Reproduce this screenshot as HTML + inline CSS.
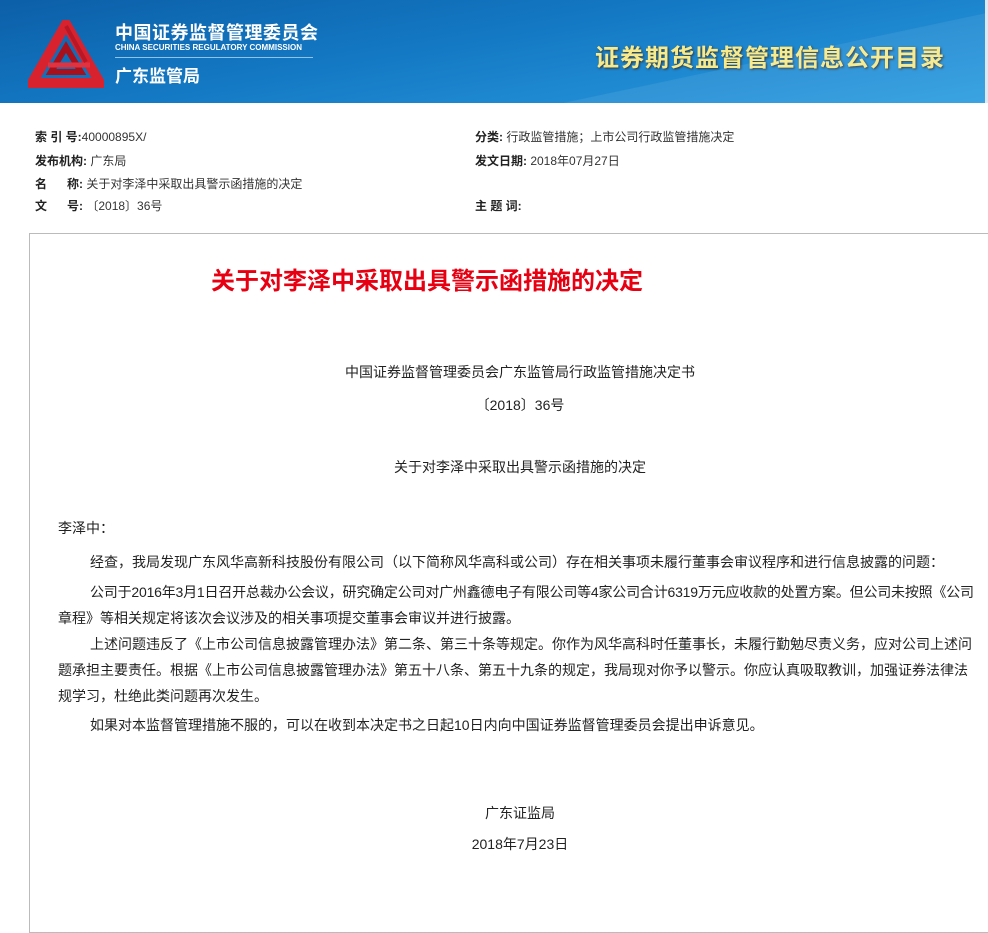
<!DOCTYPE html>
<html><head><meta charset="utf-8">
<style>
*{margin:0;padding:0;box-sizing:border-box}
body{width:988px;height:866px;overflow:hidden;background:#fff;font-family:"Liberation Sans","Noto Sans CJK SC",sans-serif;color:#222;position:relative}
.hdr{position:absolute;left:0;top:0;width:985px;height:103px;background:linear-gradient(170deg,#0c5fa8 0%,#1479c4 45%,#2a9ce0 100%);overflow:hidden}
.hdr:after{content:"";position:absolute;left:520px;top:40px;width:700px;height:200px;background:rgba(255,255,255,0.08);transform:rotate(-12deg)}
.strip{position:absolute;left:985px;top:0;width:3px;height:103px;background:#dfe9f3}
.ab{position:absolute;white-space:nowrap}
.meta{font-size:12px;color:#333}
.meta b{font-weight:bold;color:#222}
.box{position:absolute;left:29px;top:233px;width:970px;height:700px;border:1px solid #bbb}
.c{font-size:14px;color:#222;position:absolute;left:0;width:1040px;text-align:center}
.p{position:absolute;left:58px;font-size:14px;color:#222;white-space:nowrap}
</style></head><body>
<div class="hdr">
<svg class="ab" style="left:28px;top:20px" width="76" height="68" viewBox="0 0 76 68">
<polygon points="38,4 72,63 4,63" fill="none" stroke="#d8232f" stroke-width="10" stroke-linejoin="miter"/>
<polygon points="38,27 53,52 23,52" fill="none" stroke="#a8101c" stroke-width="6"/>
<line x1="20" y1="45" x2="62" y2="45" stroke="#e23240" stroke-width="5"/>
<line x1="38" y1="6" x2="58" y2="42" stroke="#b81826" stroke-width="4"/>
</svg>
<div class="ab" style="left:115px;top:19px;font-size:18px;font-weight:bold;color:#fff;letter-spacing:0.5px">中国证券监督管理委员会</div>
<div class="ab" style="left:115px;top:43px;font-size:8px;font-weight:bold;color:#fff">CHINA SECURITIES REGULATORY COMMISSION</div>
<div class="ab" style="left:115px;top:57px;width:198px;height:1px;background:#8fc3ea"></div>
<div class="ab" style="left:115px;top:62px;font-size:17px;font-weight:bold;color:#fff">广东监管局</div>
<div class="ab" style="left:595px;top:38px;font-size:24px;font-weight:bold;color:#f6ea8c;text-shadow:1px 1px 2px #333;letter-spacing:1px">证券期货监督管理信息公开目录</div>
</div>
<div class="strip"></div>

<div class="ab meta" style="left:35px;top:128px"><b>索 引 号:</b>40000895X/</div>
<div class="ab meta" style="left:475px;top:128px"><b>分类:</b> 行政监管措施；上市公司行政监管措施决定</div>
<div class="ab meta" style="left:35px;top:152px"><b>发布机构:</b> 广东局</div>
<div class="ab meta" style="left:475px;top:152px"><b>发文日期:</b> 2018年07月27日</div>
<div class="ab meta" style="left:35px;top:175px"><b>名&nbsp;&nbsp;&nbsp;&nbsp;&nbsp;&nbsp;称:</b> 关于对李泽中采取出具警示函措施的决定</div>
<div class="ab meta" style="left:35px;top:197px"><b>文&nbsp;&nbsp;&nbsp;&nbsp;&nbsp;&nbsp;号:</b> 〔2018〕36号</div>
<div class="ab meta" style="left:475px;top:197px"><b>主 题 词:</b></div>

<div class="box"></div>
<div class="ab" style="left:211px;top:261px;font-size:24px;font-weight:bold;color:#e60012">关于对李泽中采取出具警示函措施的决定</div>
<div class="c" style="top:362px">中国证券监督管理委员会广东监管局行政监管措施决定书</div>
<div class="c" style="top:395px">〔2018〕36号</div>
<div class="c" style="top:457px">关于对李泽中采取出具警示函措施的决定</div>

<div class="p" style="top:518px">李泽中：</div>
<div class="p" style="top:552px;left:90px">经查，我局发现广东风华高新科技股份有限公司（以下简称风华高科或公司）存在相关事项未履行董事会审议程序和进行信息披露的问题：</div>
<div class="p" style="top:582px;left:90px;letter-spacing:-0.2px">公司于2016年3月1日召开总裁办公会议，研究确定公司对广州鑫德电子有限公司等4家公司合计6319万元应收款的处置方案。但公司未按照《公司</div>
<div class="p" style="top:608px">章程》等相关规定将该次会议涉及的相关事项提交董事会审议并进行披露。</div>
<div class="p" style="top:634px;left:90px">上述问题违反了《上市公司信息披露管理办法》第二条、第三十条等规定。你作为风华高科时任董事长，未履行勤勉尽责义务，应对公司上述问</div>
<div class="p" style="top:660px">题承担主要责任。根据《上市公司信息披露管理办法》第五十八条、第五十九条的规定，我局现对你予以警示。你应认真吸取教训，加强证券法律法</div>
<div class="p" style="top:686px">规学习，杜绝此类问题再次发生。</div>
<div class="p" style="top:715px;left:90px">如果对本监督管理措施不服的，可以在收到本决定书之日起10日内向中国证券监督管理委员会提出申诉意见。</div>

<div class="c" style="top:803px">广东证监局</div>
<div class="c" style="top:834px">2018年7月23日</div>
</body></html>
